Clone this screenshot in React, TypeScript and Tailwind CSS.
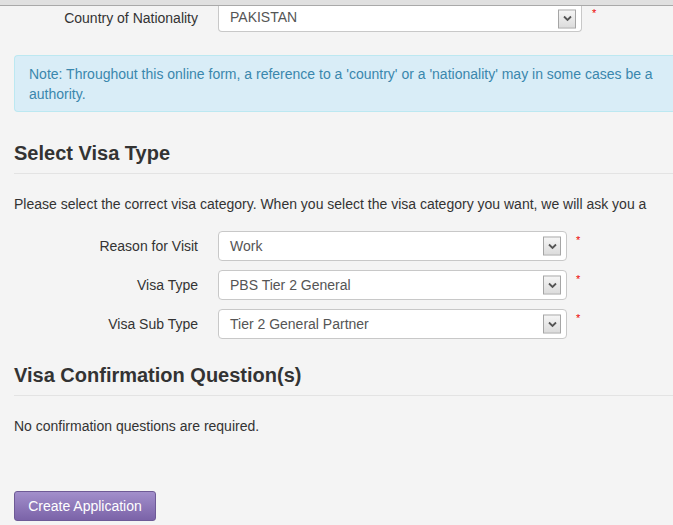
import React from 'react';

const font = { fontFamily: '"Liberation Sans", Arial, sans-serif' };

const Arrow = () => (
  <span className="absolute right-[5px] top-1/2 -translate-y-1/2 w-[18px] h-[19px] border border-[#a5a5a5] bg-gradient-to-b from-[#f5f5f5] to-[#dcdcdc] flex items-center justify-center">
    <svg width="9" height="6" viewBox="0 0 9 6">
      <path d="M1 1 L4.5 4.5 L8 1" fill="none" stroke="#555" strokeWidth="1.8" />
    </svg>
  </span>
);

const SelectBox = ({ value, width, clippedTop }: { value: string; width: string; clippedTop?: boolean }) => (
  <div
    className={`relative ${width} bg-white border border-[#c8c8c8] text-[14px] text-[#555] pl-[11px] flex items-center ${
      clippedTop ? 'h-[26px] border-t-0 rounded-b-[4px] pb-[2px]' : 'h-[30px] rounded-[4px]'
    }`}
  >
    {value}
    <Arrow />
  </div>
);

const Row = ({ label, value }: { label: string; value: string }) => (
  <div className="flex items-start">
    <div className="w-[184px] text-right h-[30px] flex items-center justify-end text-[14px] text-[#333]">{label}</div>
    <div className="ml-[20px]">
      <SelectBox value={value} width="w-[349px]" />
    </div>
    <span className="ml-[9px] mt-[4px] text-[#e00] text-[11px] leading-none">*</span>
  </div>
);

export default function App() {
  return (
    <div className="w-[673px] h-[525px] overflow-hidden bg-[#f4f4f4]" style={font}>
      <div className="h-[6px] bg-[#e0e0e0] border-b border-[#a9a9a9]" />
      <div className="pl-[14px]">
        <div className="flex items-start">
          <div className="w-[184px] h-[24px] flex items-center justify-end text-[14px] text-[#333]">Country of Nationality</div>
          <div className="ml-[20px]">
            <SelectBox value="PAKISTAN" width="w-[364px]" clippedTop />
          </div>
          <span className="ml-[10px] mt-[2px] text-[#e00] text-[11px] leading-none">*</span>
        </div>

        <div className="mt-[23px] h-[57px] bg-[#d9edf7] border border-r-0 border-[#bce8f1] rounded-l-[4px] pl-[14px] pt-[8px] text-[14px] leading-[20px] text-[#3a87ad] whitespace-nowrap overflow-hidden">
          Note: Throughout this online form, a reference to a 'country' or a 'nationality' may in some cases be a
          <br />
          authority.
        </div>

        <h2 className="mt-[29px] text-[20px] font-bold text-[#333] leading-[24px]">Select Visa Type</h2>
        <div className="mt-[8px] border-t border-[#e3e3e3]" />
        <p className="mt-[20px] text-[14px] text-[#333] leading-[20px] whitespace-nowrap overflow-hidden">
          Please select the correct visa category. When you select the visa category you want, we will ask you a
        </p>

        <div className="mt-[17px] flex flex-col gap-[9px]">
          <Row label="Reason for Visit" value="Work" />
          <Row label="Visa Type" value="PBS Tier 2 General" />
          <Row label="Visa Sub Type" value="Tier 2 General Partner" />
        </div>

        <h2 className="mt-[24px] text-[20px] font-bold text-[#333] leading-[24px]">Visa Confirmation Question(s)</h2>
        <div className="mt-[8px] border-t border-[#e3e3e3]" />
        <p className="mt-[20px] text-[14px] text-[#333] leading-[20px]">No confirmation questions are required.</p>

        <button className="mt-[55px] w-[142px] h-[30px] rounded-[3px] border border-[#6e5a96] bg-gradient-to-b from-[#a28fcb] to-[#7b63a8] text-white text-[14px]">
          Create Application
        </button>
      </div>
    </div>
  );
}
